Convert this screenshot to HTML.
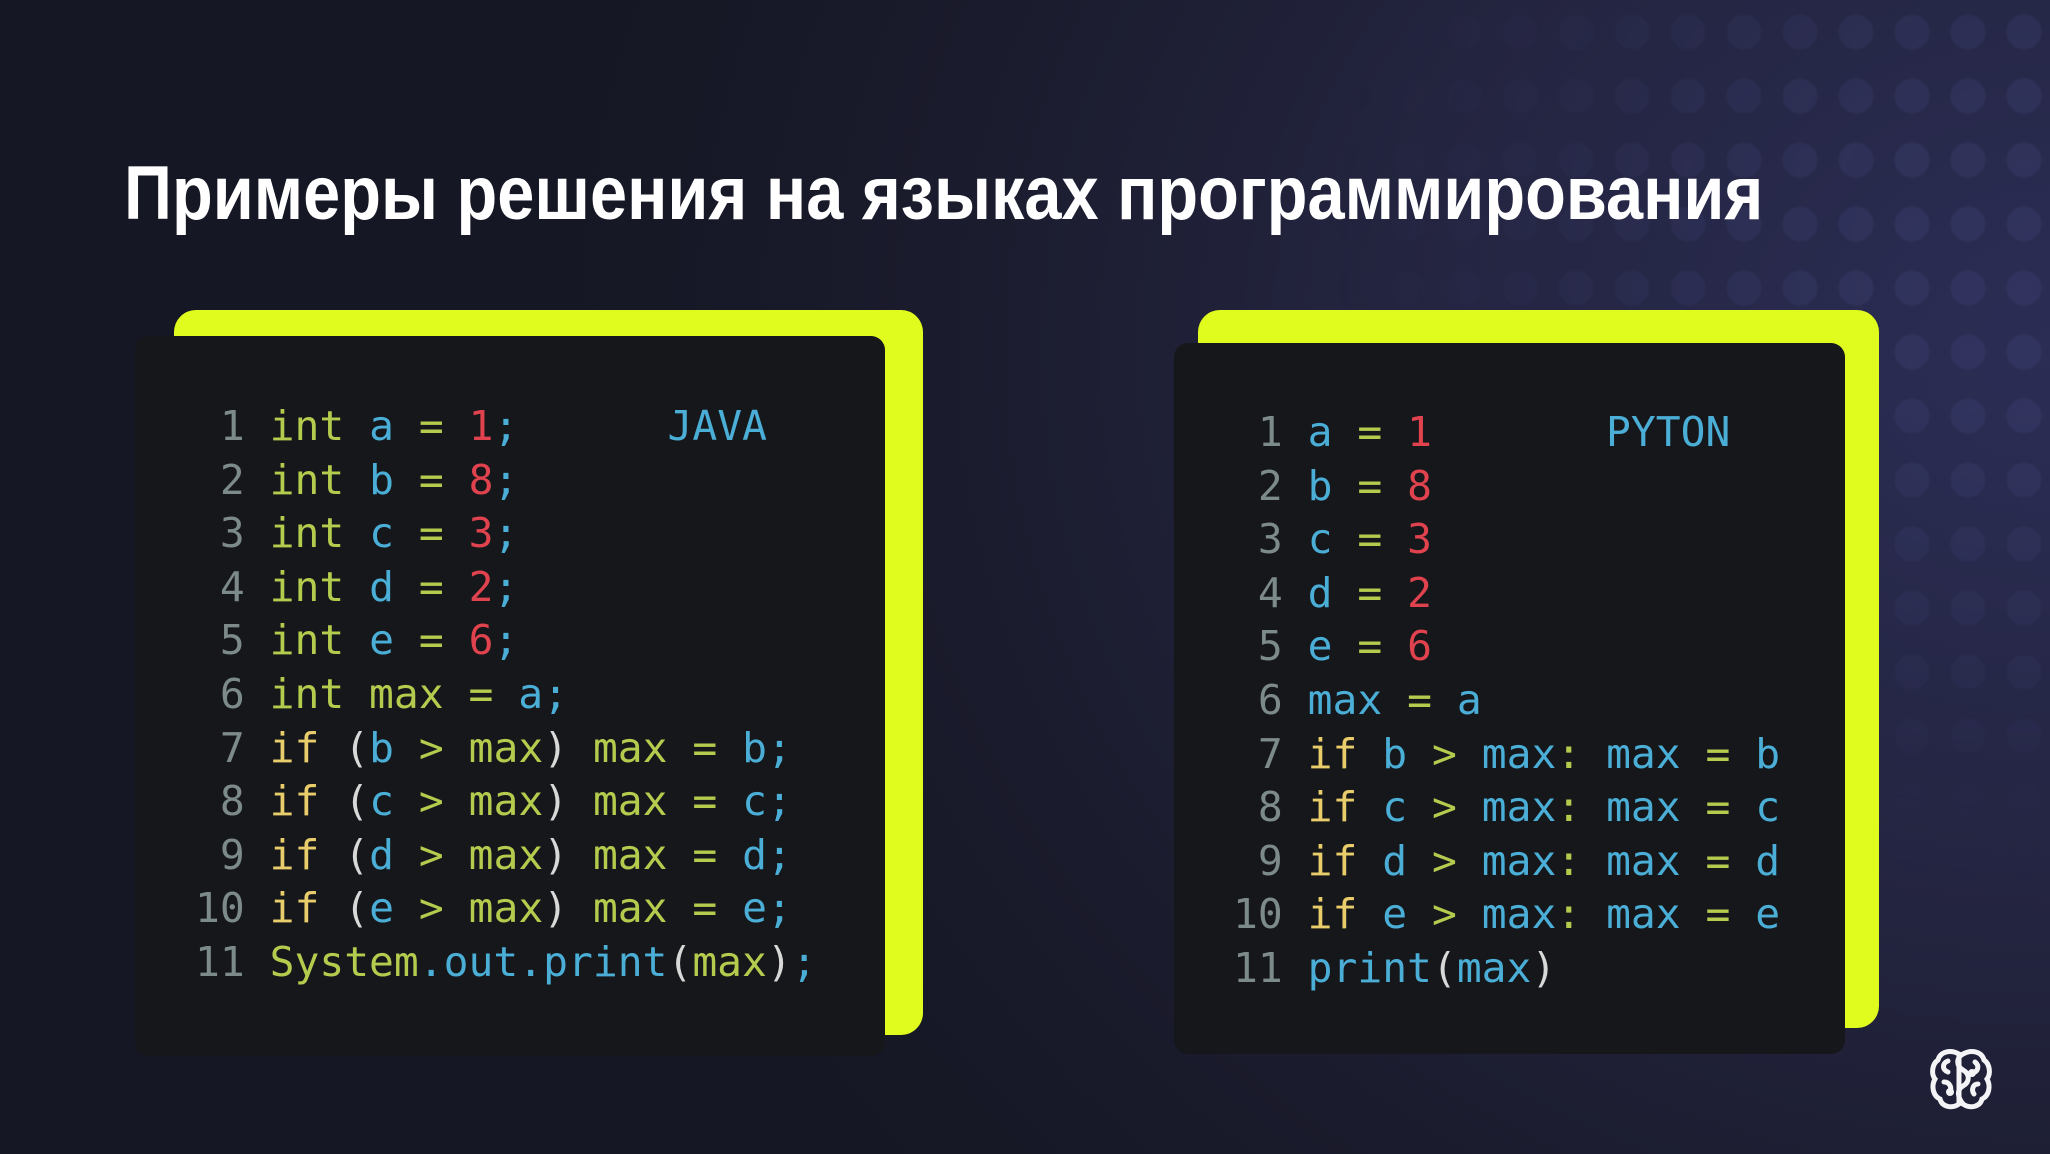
<!DOCTYPE html>
<html><head><meta charset="utf-8"><style>
html,body{margin:0;padding:0}
body{width:2050px;height:1154px;overflow:hidden;position:relative;
background:radial-gradient(ellipse 1500px 1300px at 2050px 350px,#2b2d55 0%,#23243f 45%,#1a1b2c 75%,#151724 100%);
font-family:"Liberation Sans",sans-serif}
.dots{position:absolute;left:1100px;top:0;width:950px;height:1154px;
background-image:radial-gradient(circle at 50% 50%,rgba(90,95,160,.16) 0 16px,transparent 19px);
background-size:56px 64px;
-webkit-mask-image:radial-gradient(ellipse 900px 800px at 950px 250px,#000 20%,transparent 80%);
mask-image:radial-gradient(ellipse 900px 800px at 950px 250px,#000 20%,transparent 80%)}
h1{position:absolute;left:124px;top:144px;margin:0;color:#fff;font-weight:bold;font-size:76px;line-height:100px;white-space:nowrap;transform-origin:0 0;transform:scaleX(0.878)}
.y{position:absolute;background:#e0fc1f;border-radius:22px}
.p{position:absolute;background:#16171b;border-radius:14px}
pre{position:absolute;margin:0;font-family:"DejaVu Sans Mono",monospace;font-size:41.3px;line-height:53.6px;color:#d8d8d8}
.n{color:#7d8a8a}.g{color:#b4cc4e}.b{color:#4aaed6}.r{color:#e0424e}.k{color:#e8cd6a}.w{color:#d8d8d8}
</style></head><body>
<div class="dots"></div>
<h1>Примеры решения на языках программирования</h1>

<div class="y" style="left:174px;top:310px;width:749px;height:725px"></div>
<div class="p" style="left:135px;top:336px;width:750px;height:720px"></div>
<pre style="left:195px;top:400px"><span class="n"> 1</span> <span class="g">int</span> <span class="b">a</span> <span class="g">=</span> <span class="r">1</span><span class="b">;</span>      <span class="b">JAVA</span>
<span class="n"> 2</span> <span class="g">int</span> <span class="b">b</span> <span class="g">=</span> <span class="r">8</span><span class="b">;</span>
<span class="n"> 3</span> <span class="g">int</span> <span class="b">c</span> <span class="g">=</span> <span class="r">3</span><span class="b">;</span>
<span class="n"> 4</span> <span class="g">int</span> <span class="b">d</span> <span class="g">=</span> <span class="r">2</span><span class="b">;</span>
<span class="n"> 5</span> <span class="g">int</span> <span class="b">e</span> <span class="g">=</span> <span class="r">6</span><span class="b">;</span>
<span class="n"> 6</span> <span class="g">int max</span> <span class="g">=</span> <span class="b">a;</span>
<span class="n"> 7</span> <span class="k">if</span> <span class="w">(</span><span class="b">b</span> <span class="g">&gt;</span> <span class="g">max</span><span class="w">)</span> <span class="g">max</span> <span class="g">=</span> <span class="b">b;</span>
<span class="n"> 8</span> <span class="k">if</span> <span class="w">(</span><span class="b">c</span> <span class="g">&gt;</span> <span class="g">max</span><span class="w">)</span> <span class="g">max</span> <span class="g">=</span> <span class="b">c;</span>
<span class="n"> 9</span> <span class="k">if</span> <span class="w">(</span><span class="b">d</span> <span class="g">&gt;</span> <span class="g">max</span><span class="w">)</span> <span class="g">max</span> <span class="g">=</span> <span class="b">d;</span>
<span class="n">10</span> <span class="k">if</span> <span class="w">(</span><span class="b">e</span> <span class="g">&gt;</span> <span class="g">max</span><span class="w">)</span> <span class="g">max</span> <span class="g">=</span> <span class="b">e;</span>
<span class="n">11</span> <span class="g">System</span><span class="b">.out.print</span><span class="w">(</span><span class="g">max</span><span class="w">)</span><span class="b">;</span></pre>

<div class="y" style="left:1198px;top:310px;width:681px;height:718px"></div>
<div class="p" style="left:1174px;top:343px;width:671px;height:711px"></div>
<pre style="left:1233px;top:406px"><span class="n"> 1</span> <span class="b">a</span> <span class="g">=</span> <span class="r">1</span>       <span class="b">PYTON</span>
<span class="n"> 2</span> <span class="b">b</span> <span class="g">=</span> <span class="r">8</span>
<span class="n"> 3</span> <span class="b">c</span> <span class="g">=</span> <span class="r">3</span>
<span class="n"> 4</span> <span class="b">d</span> <span class="g">=</span> <span class="r">2</span>
<span class="n"> 5</span> <span class="b">e</span> <span class="g">=</span> <span class="r">6</span>
<span class="n"> 6</span> <span class="b">max</span> <span class="g">=</span> <span class="b">a</span>
<span class="n"> 7</span> <span class="k">if</span> <span class="b">b</span> <span class="g">&gt;</span> <span class="b">max</span><span class="g">:</span> <span class="b">max</span> <span class="g">=</span> <span class="b">b</span>
<span class="n"> 8</span> <span class="k">if</span> <span class="b">c</span> <span class="g">&gt;</span> <span class="b">max</span><span class="g">:</span> <span class="b">max</span> <span class="g">=</span> <span class="b">c</span>
<span class="n"> 9</span> <span class="k">if</span> <span class="b">d</span> <span class="g">&gt;</span> <span class="b">max</span><span class="g">:</span> <span class="b">max</span> <span class="g">=</span> <span class="b">d</span>
<span class="n">10</span> <span class="k">if</span> <span class="b">e</span> <span class="g">&gt;</span> <span class="b">max</span><span class="g">:</span> <span class="b">max</span> <span class="g">=</span> <span class="b">e</span>
<span class="n">11</span> <span class="b">print</span><span class="w">(</span><span class="b">max</span><span class="w">)</span></pre>

<svg style="position:absolute;left:1928px;top:1046px" width="66" height="66" viewBox="0 0 66 66" fill="none" stroke="#f4f4f6" stroke-width="5" stroke-linecap="round">
<path d="M31 8 C22 3 12 6 10 14 C4 18 3 28 7 33 C3 40 5 50 12 53 C14 61 24 63 31 58 Z"/>
<path d="M35 8 C44 3 54 6 56 14 C62 18 63 28 59 33 C63 40 61 50 54 53 C52 61 42 63 35 58"/>
<path d="M35 8 C28 12 28 20 35 24 C42 28 42 36 35 40 C28 44 30 52 35 58"/>
<path d="M20 15 C14 17 14 24 20 26"/>
<path d="M16 36 C22 36 24 42 22 46"/>
<path d="M47 16 C52 20 50 26 44 27"/>
<path d="M50 38 C45 38 43 44 46 48"/>
<circle cx="22" cy="46" r="1.5" fill="#f4f4f6"/>
<circle cx="44" cy="27" r="1.5" fill="#f4f4f6"/>
</svg>
</body></html>
